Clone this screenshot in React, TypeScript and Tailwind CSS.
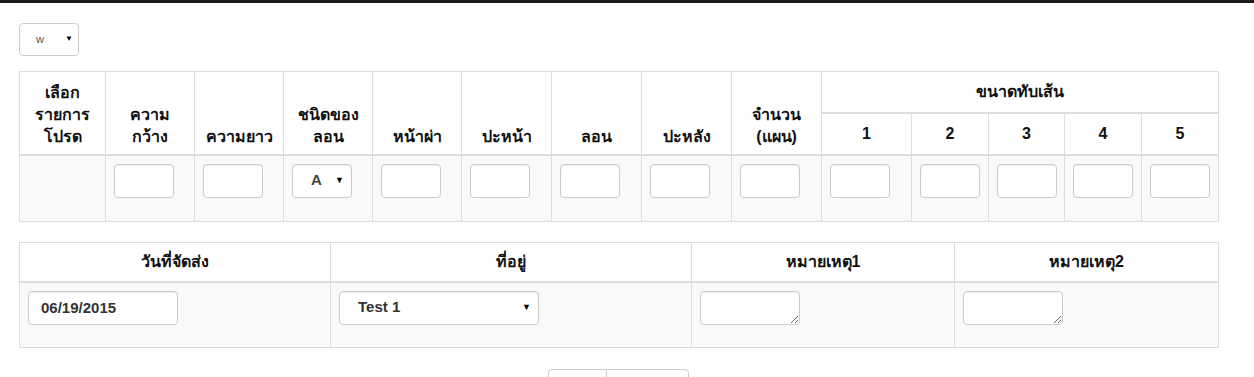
import { useState } from "react";

const FONT = "font-['Liberation_Sans','Noto_Sans',sans-serif]";

const thBase =
  "border border-[#ddd] border-b-2 px-2 py-[6px] text-center align-bottom font-bold text-[16px] leading-[22px] text-[#111]";
const tdBase = "border border-[#ddd] px-2 pt-2 align-top bg-[#f9f9f9]";
const inputBase =
  "block h-[34px] rounded-[4px] border border-[#ccc] bg-white shadow-[inset_0_1px_1px_rgba(0,0,0,0.075)] outline-none";

function SmallInput() {
  return <input type="text" className={`${inputBase} w-[60px] px-3`} />;
}

function FakeSelect({
  value,
  width,
  className,
}: {
  value: string;
  width: string;
  className?: string;
}) {
  return (
    <div className={`relative ${width}`}>
      <div
        className={`${inputBase} w-full flex items-center pl-[18px] pr-6 ${className ?? ""}`}
      >
        {value}
      </div>
      <span className="absolute right-[8px] top-[12px] text-[9px] leading-none text-black">
        ▼
      </span>
    </div>
  );
}

export default function App() {
  const [date, setDate] = useState("06/19/2015");
  const foldCols = ["1", "2", "3", "4", "5"];

  return (
    <div className={`min-h-[377px] bg-white ${FONT}`}>
      <div className="h-[3px] bg-[#1b1b1b]" />

      <div className="ml-[19px] w-[1199px] pt-[20px]">
        {/* unit select */}
        <div className="relative w-[60px]">
          <div className="h-[33px] rounded-[4px] border border-[#ccc] bg-white flex items-center pl-[16px] text-[11px] text-[#555]">
            w
          </div>
          <span className="absolute right-[6px] top-[12px] text-[8px] leading-none text-black">
            ▼
          </span>
        </div>

        {/* product table */}
        <table className="mt-[15px] w-full table-fixed border-collapse border border-[#ddd]">
          <colgroup>
            <col className="w-[86px]" />
            <col className="w-[89px]" />
            <col className="w-[89px]" />
            <col className="w-[89px]" />
            <col className="w-[89px]" />
            <col className="w-[90px]" />
            <col className="w-[90px]" />
            <col className="w-[90px]" />
            <col className="w-[90px]" />
            <col className="w-[90px]" />
            <col className="w-[77px]" />
            <col className="w-[76px]" />
            <col className="w-[77px]" />
            <col className="w-[77px]" />
          </colgroup>
          <thead>
            <tr className="h-[41px]">
              <th rowSpan={2} className={thBase}>
                เลือก
                <br />
                รายการ
                <br />
                โปรด
              </th>
              <th rowSpan={2} className={thBase}>
                ความ
                <br />
                กว้าง
              </th>
              <th rowSpan={2} className={thBase}>
                ความยาว
              </th>
              <th rowSpan={2} className={thBase}>
                ชนิดของ
                <br />
                ลอน
              </th>
              <th rowSpan={2} className={thBase}>
                หน้าผ่า
              </th>
              <th rowSpan={2} className={thBase}>
                ปะหน้า
              </th>
              <th rowSpan={2} className={thBase}>
                ลอน
              </th>
              <th rowSpan={2} className={thBase}>
                ปะหลัง
              </th>
              <th rowSpan={2} className={thBase}>
                จำนวน
                <br />
                (แผน)
              </th>
              <th colSpan={5} className={`${thBase} align-middle`}>
                ขนาดทับเส้น
              </th>
            </tr>
            <tr className="h-[42px]">
              {foldCols.map((c) => (
                <th key={c} className={`${thBase} align-middle text-[15px]`}>
                  {c}
                </th>
              ))}
            </tr>
          </thead>
          <tbody>
            <tr className="h-[67px]">
              <td className={tdBase} />
              <td className={tdBase}>
                <SmallInput />
              </td>
              <td className={tdBase}>
                <SmallInput />
              </td>
              <td className={tdBase}>
                <FakeSelect
                  value="A"
                  width="w-[60px]"
                  className="text-[15px] font-bold text-[#444]"
                />
              </td>
              {[0, 1, 2, 3, 4, 5, 6, 7, 8, 9].map((i) => (
                <td key={i} className={tdBase}>
                  <SmallInput />
                </td>
              ))}
            </tr>
          </tbody>
        </table>

        {/* delivery table */}
        <table className="mt-[20px] w-full table-fixed border-collapse border border-[#ddd]">
          <colgroup>
            <col className="w-[311px]" />
            <col className="w-[361px]" />
            <col className="w-[263px]" />
            <col className="w-[264px]" />
          </colgroup>
          <thead>
            <tr className="h-[39px]">
              <th className={`${thBase} align-middle`}>วันที่จัดส่ง</th>
              <th className={`${thBase} align-middle`}>ที่อยู่</th>
              <th className={`${thBase} align-middle`}>หมายเหตุ1</th>
              <th className={`${thBase} align-middle`}>หมายเหตุ2</th>
            </tr>
          </thead>
          <tbody>
            <tr className="h-[66px]">
              <td className={tdBase}>
                <input
                  type="text"
                  value={date}
                  onChange={(e) => setDate(e.target.value)}
                  className={`${inputBase} w-[150px] px-3 text-[15px] font-bold text-[#333]`}
                />
              </td>
              <td className={tdBase}>
                <FakeSelect
                  value="Test 1"
                  width="w-[200px]"
                  className="text-[15px] font-bold text-[#333]"
                />
              </td>
              <td className={tdBase}>
                <textarea className={`${inputBase} w-[100px] resize`} />
              </td>
              <td className={tdBase}>
                <textarea className={`${inputBase} w-[100px] resize`} />
              </td>
            </tr>
          </tbody>
        </table>

        {/* actions */}
        <div className="mt-[21px] flex justify-center">
          <div className="flex">
            <button className="h-[34px] w-[59px] rounded-l-[4px] border border-[#ccc] bg-white text-[14px] font-bold text-[#333]">
              บันทึก
            </button>
            <button className="-ml-px h-[34px] w-[83px] rounded-r-[4px] border border-[#ccc] bg-white text-[14px] font-bold text-[#333]">
              Reset
            </button>
          </div>
        </div>
      </div>
    </div>
  );
}
